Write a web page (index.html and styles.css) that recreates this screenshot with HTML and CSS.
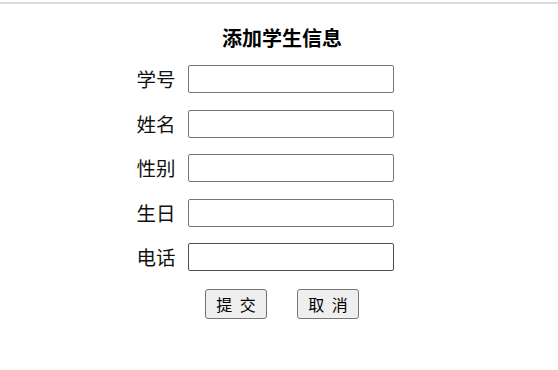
FILE: index.html
```html
<!DOCTYPE html>
<html lang="zh-CN">
<head>
<meta charset="utf-8">
<title>添加学生信息</title>
<link rel="stylesheet" href="styles.css">
</head>
<body>
<div class="topline"></div>
<div class="page">
  <h1 class="title">添加学生信息</h1>
  <div class="form-wrap">
    <div class="form">
      <label class="label">学号</label><input class="field" type="text">
      <label class="label">姓名</label><input class="field" type="text">
      <label class="label">性别</label><input class="field" type="text">
      <label class="label">生日</label><input class="field" type="text">
      <label class="label">电话</label><input class="field field-dark" type="text">
    </div>
  </div>
  <div class="actions">
    <button class="btn" type="button">提 交</button>
    <button class="btn" type="button">取 消</button>
  </div>
</div>
</body>
</html>
```
FILE: styles.css
```css
html, body {
  margin: 0;
  padding: 0;
  background: #ffffff;
  font-family: "Noto Sans CJK SC", "Noto Sans", sans-serif;
  color: #000;
}
.topline {
  margin-top: 2px;
  height: 2px;
  background: #dcdce0;
}
.page {
  width: 558px;
}
.title {
  margin: 0;
  padding: 20px 0 0 6px;
  height: 28px;
  line-height: 28px;
  text-align: center;
  font-size: 20px;
  font-weight: bold;
}
.form-wrap {
  display: flex;
  justify-content: center;
  padding-right: 28px;
  padding-top: 13px;
}
.form {
  display: grid;
  grid-template-columns: auto 206px;
  column-gap: 12px;
  row-gap: 16.5px;
  align-items: center;
}
.label {
  font-size: 19.5px;
  line-height: 28px;
  color: #111;
}
.field {
  box-sizing: border-box;
  width: 206px;
  height: 28px;
  margin: 0;
  border: 1px solid #767676;
  border-radius: 2px;
  background: #fff;
  padding: 0 4px;
}
.field-dark {
  border-color: #4f4f4f;
}
.actions {
  display: flex;
  justify-content: center;
  gap: 30px;
  padding: 18px 0 0 6px;
}
.btn {
  box-sizing: border-box;
  width: 62px;
  height: 30px;
  margin: 0;
  padding: 0;
  border: 1px solid #767676;
  border-radius: 3px;
  background: #efefef;
  font-family: "Noto Sans CJK SC", "Noto Sans", sans-serif;
  font-size: 16px;
  word-spacing: 4px;
  color: #000;
}
```
